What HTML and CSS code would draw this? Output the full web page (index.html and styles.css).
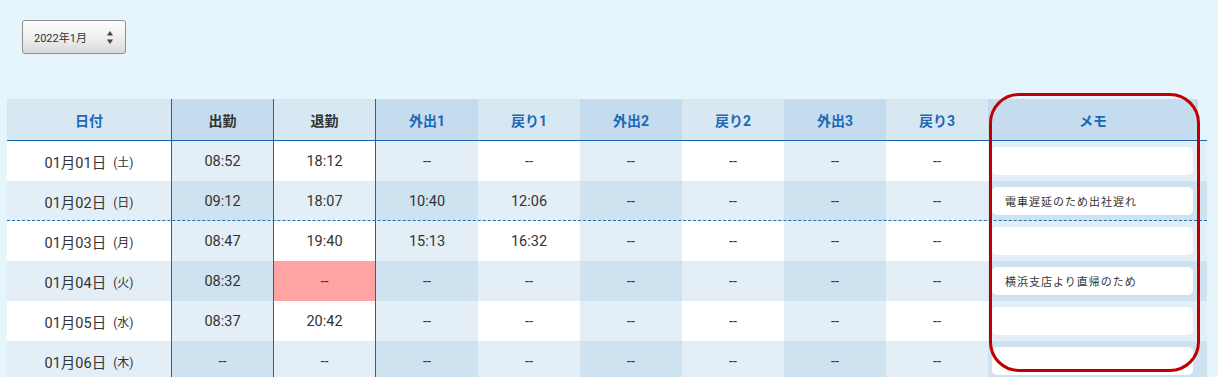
FILE: index.html
```html
<!DOCTYPE html>
<html lang="ja">
<head>
<meta charset="utf-8">
<title>勤怠一覧</title>
<link rel="stylesheet" href="styles.css">
</head>
<body>
<div class="page">
  <div class="toolbar">
    <div class="month-select">
      <span class="month-label">2022年1月</span>
      <svg class="spin" width="8" height="15" viewBox="0 0 8 15"><path d="M4 1 L7 5.5 L1 5.5 Z" fill="#444"/><path d="M4 14 L7 9.5 L1 9.5 Z" fill="#444"/></svg>
    </div>
  </div>
  <div class="table-wrap">
    <div class="row head">
      <div class="c lt blue">日付</div>
      <div class="c dk dark vline">出勤</div>
      <div class="c lt dark vline">退勤</div>
      <div class="c dk blue">外出1</div>
      <div class="c lt blue">戻り1</div>
      <div class="c dk blue">外出2</div>
      <div class="c lt blue">戻り2</div>
      <div class="c dk blue">外出3</div>
      <div class="c lt blue">戻り3</div>
      <div class="c dk blue">メモ</div>
      <div class="c gutter"></div>
    </div>

    <div class="row odd">
      <div class="c a vline-first">01月01日<small>(土)</small></div>
      <div class="c b vline">08:52</div>
      <div class="c a vline">18:12</div>
      <div class="c b">--</div><div class="c a">--</div>
      <div class="c b">--</div><div class="c a">--</div>
      <div class="c b">--</div><div class="c a">--</div>
      <div class="c b memo"><div class="memo-box"></div></div>
    </div>
    <div class="row even dashed">
      <div class="c a vline-first">01月02日<small>(日)</small></div>
      <div class="c b vline">09:12</div>
      <div class="c a vline">18:07</div>
      <div class="c b">10:40</div><div class="c a">12:06</div>
      <div class="c b">--</div><div class="c a">--</div>
      <div class="c b">--</div><div class="c a">--</div>
      <div class="c b memo"><div class="memo-box">電車遅延のため出社遅れ</div></div>
    </div>
    <div class="row odd">
      <div class="c a vline-first">01月03日<small>(月)</small></div>
      <div class="c b vline">08:47</div>
      <div class="c a vline">19:40</div>
      <div class="c b">15:13</div><div class="c a">16:32</div>
      <div class="c b">--</div><div class="c a">--</div>
      <div class="c b">--</div><div class="c a">--</div>
      <div class="c b memo"><div class="memo-box"></div></div>
    </div>
    <div class="row even">
      <div class="c a vline-first">01月04日<small>(火)</small></div>
      <div class="c b vline">08:32</div>
      <div class="c a vline alert">--</div>
      <div class="c b">--</div><div class="c a">--</div>
      <div class="c b">--</div><div class="c a">--</div>
      <div class="c b">--</div><div class="c a">--</div>
      <div class="c b memo"><div class="memo-box">横浜支店より直帰のため</div></div>
    </div>
    <div class="row odd">
      <div class="c a vline-first">01月05日<small>(水)</small></div>
      <div class="c b vline">08:37</div>
      <div class="c a vline">20:42</div>
      <div class="c b">--</div><div class="c a">--</div>
      <div class="c b">--</div><div class="c a">--</div>
      <div class="c b">--</div><div class="c a">--</div>
      <div class="c b memo"><div class="memo-box"></div></div>
    </div>
    <div class="row even">
      <div class="c a vline-first">01月06日<small>(木)</small></div>
      <div class="c b vline">--</div>
      <div class="c a vline">--</div>
      <div class="c b">--</div><div class="c a">--</div>
      <div class="c b">--</div><div class="c a">--</div>
      <div class="c b">--</div><div class="c a">--</div>
      <div class="c b memo"><div class="memo-box"></div></div>
    </div>

    <div class="highlight"></div>
  </div>
</div>
</body>
</html>
```
FILE: styles.css
```css
* { box-sizing: border-box; }
html, body { margin: 0; padding: 0; }
body {
  background: #e6f4fc;
  font-family: Roboto, "Noto Sans CJK JP", sans-serif;
  color: #333;
  width: 1218px;
  height: 377px;
  overflow: hidden;
}
.page { padding: 20px 0 0 7px; }
.toolbar { padding-left: 15px; height: 79px; }
.month-select {
  width: 104px;
  height: 34px;
  border: 1px solid #8e8e8e;
  border-radius: 3px;
  background: linear-gradient(#fdfdfd, #f0f0f0 50%, #d9d9d9);
  display: flex;
  align-items: center;
  padding-left: 11px;
  gap: 14px;
}
.month-label { font-size: 11px; color: #333; width: 58px; }
.spin { display: block; }

.table-wrap { position: relative; width: 1200px; }
.row {
  display: grid;
  grid-template-columns: 165px repeat(8, 102px) 210px 9px;
  height: 40px;
}
.row.head {
  height: 42px;
  border-bottom: 1px solid #1565b5;
}
.c {
  display: flex;
  align-items: center;
  justify-content: center;
  font-size: 14.5px;
}
.head .c { font-weight: 700; font-size: 14px; }
.head .lt { background: #d8e8f3; }
.head .dk { background: #c4dcee; }
.head .gutter { background: transparent; }
.blue { color: #1c68b6; }
.dark { color: #333; }
.vline { border-right: 1px solid #1565b5; }
.head .c:first-child, .vline-first { border-right: 1px solid #1565b5; }

.odd .a { background: #ffffff; }
.odd .b { background: #e3eef7; }
.even .a { background: #e3eef7; }
.even .b { background: #cfe2f0; }
.even .a.alert { background: #ffa3a3; }

.row .memo {
  grid-column: span 2;
  justify-content: flex-start;
  padding-left: 4px;
}
.memo-box {
  width: 201px;
  height: 28px;
  background: #fff;
  border-radius: 5px;
  display: flex;
  align-items: center;
  padding-left: 13px;
  font-size: 11px;
  letter-spacing: 1px;
  color: #333;
  font-family: "Noto Sans CJK JP", sans-serif;
}
small {
  font-size: 12px;
  margin-left: 7px;
  color: #333;
}
.row.dashed { position: relative; }
.row.dashed::after {
  content: "";
  position: absolute;
  left: 0;
  right: 0;
  bottom: 0;
  border-bottom: 1px dashed #1a70c0;
}
.highlight {
  position: absolute;
  left: 982px;
  top: -6px;
  width: 211px;
  height: 279px;
  border: 3px solid #c00000;
  border-radius: 30px;
  pointer-events: none;
}
```
